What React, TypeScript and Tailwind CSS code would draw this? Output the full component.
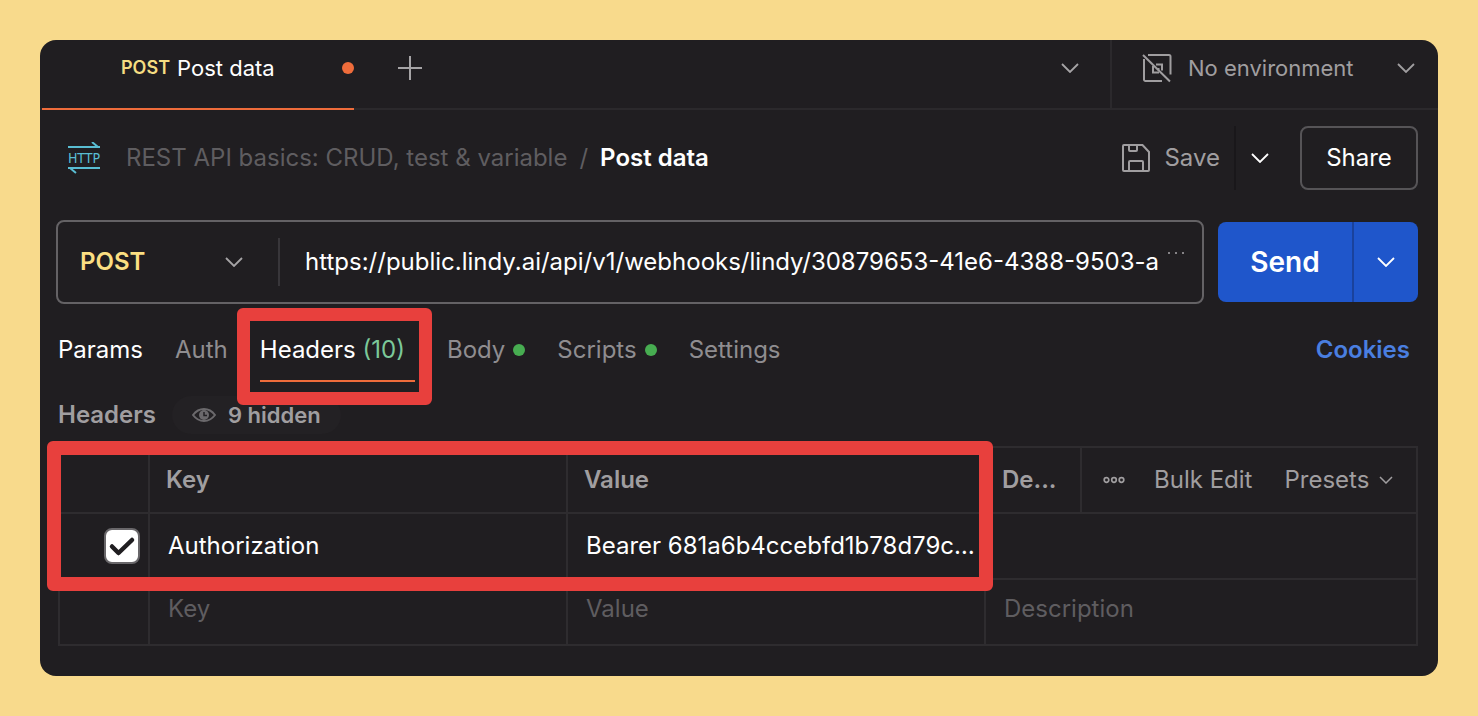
import React from 'react';

const Chevron: React.FC<{ className?: string }> = ({ className = '' }) => (
  <svg viewBox="0 0 18 10" className={`w-[18px] h-[10px] shrink-0 ${className}`} fill="none" stroke="currentColor" strokeWidth="1.8" aria-hidden="true">
    <path d="M1 1l8 8 8-8" />
  </svg>
);

const TabBar: React.FC = () => (
  <div className="flex h-[70px] pl-0.5 border-b-2 border-[#2b292c]">
    <button className="flex items-center w-[312px] h-[70px] pb-3 pl-[79px] border-b-2 border-[#ee6c3b]">
      <span className="text-lg font-semibold text-[#f5dd82]">POST</span>
      <span className="ml-[7px] text-[22px] text-white">Post data</span>
      <span className="ml-auto w-3 h-3 rounded-full bg-[#ee6c3b]"></span>
    </button>
    <button aria-label="New tab" className="h-14 px-11 text-[#a6a4a6]">
      <svg viewBox="0 0 24 24" className="w-6 h-6" fill="none" stroke="currentColor" strokeWidth="2">
        <path d="M12 0v24M0 12h24" />
      </svg>
    </button>
    <button aria-label="All tabs" className="ml-auto h-14 px-[31px] text-[#a6a4a6]">
      <Chevron />
    </button>
    <div className="w-[328px] border-l-2 border-[#2b292c]">
      <button className="flex items-center w-full h-14 pl-[30px] pr-[23px] text-[22px] text-[#a09ea0]">
        <svg viewBox="0 0 30 30" className="w-[30px] h-[30px] mr-4" fill="none" stroke="currentColor" strokeWidth="2" aria-hidden="true">
          <path d="M6 2h21a1.500 1.500 0 0 1 1.500 1.500V21.500M2 6v20.500a1.500 1.500 0 0 0 1.500 1.500H20" />
          <path d="M1 2l27 26.500" />
          <path d="M14 11.500h6v6M11 13v6.500h6M15.500 16h2" />
        </svg>
        No environment
        <Chevron className="ml-auto" />
      </button>
    </div>
  </div>
);

const TitleRow: React.FC = () => (
  <div className="flex items-center py-4 pl-[26px] pr-5 text-2xl">
    <svg viewBox="0 0 36 32" className="w-9 h-8" aria-hidden="true">
      <path d="M2 5h32M26 0l6 5M34 26H2M4 26l6 5" fill="none" stroke="#59bdd2" strokeWidth="2" />
      <text x="18" y="21" textAnchor="middle" fontSize="14" fill="#59bdd2" className="font-['DejaVu_Sans_Condensed',sans-serif]">HTTP</text>
    </svg>
    <a href="#collection" className="ml-6 text-[#5f5d60]">REST API basics: CRUD, test &amp; variable</a>
    <span className="mx-3 text-[#5f5d60]">/</span>
    <h1 className="font-semibold text-white">Post data</h1>
    <button className="flex items-center ml-auto text-[#a09ea0]">
      <svg viewBox="0 0 28 28" className="w-7 h-7 mr-3.5" fill="none" stroke="currentColor" strokeWidth="2" aria-hidden="true">
        <path d="M2 1h18.500L27 8v18a1 1 0 0 1-1 1H2a1 1 0 0 1-1-1V2a1 1 0 0 1 1-1z" />
        <path d="M7 1v5a1 1 0 0 0 1 1h6a1 1 0 0 0 1-1V1M7 27v-9a1 1 0 0 1 1-1h12a1 1 0 0 1 1 1v9" />
      </svg>
      Save
    </button>
    <button aria-label="Save options" className="h-16 ml-3.5 mr-[31px] pl-[15px] border-l-2 border-[#19171a] text-white">
      <Chevron />
    </button>
    <button className="w-[118px] h-16 rounded-lg border-2 border-[#565457] text-white">Share</button>
  </div>
);

const UrlRow: React.FC = () => (
  <div className="flex items-center gap-3.5 pt-3.5 pl-4 pr-5">
    <div className="flex flex-1 items-center h-[84px] rounded-lg border-2 border-[#646265] text-2xl">
      <div className="relative w-[222px] border-r-2 border-[#38363a]">
        <select aria-label="Method" className="appearance-none w-full h-12 pl-[22px] font-semibold text-[#fbdf82] bg-transparent">
          <option>POST</option>
        </select>
        <Chevron className="absolute right-[35px] top-[19px] text-[#a6a4a6] pointer-events-none" />
      </div>
      <input
        aria-label="Request URL"
        className="flex-1 min-w-0 ml-[25px] bg-transparent text-white"
        defaultValue="https://public.lindy.ai/api/v1/webhooks/lindy/30879653-41e6-4388-9503-a"
      />
      <svg viewBox="0 0 16 20" className="w-4 h-5 ml-[5px] mr-[18px] text-[#858386]" fill="currentColor" aria-hidden="true">
        <path d="M0 0h2v2H0zM7 0h2v2H7zM14 0h2v2h-2z" />
      </svg>
    </div>
    <div className="flex w-[200px] h-20 rounded-lg overflow-hidden bg-[#1f56cb] text-white">
      <button className="flex-1 text-[28px] font-semibold">Send</button>
      <button aria-label="Send options" className="flex items-center justify-center w-[66px] border-l-2 border-[#1a429c]">
        <Chevron />
      </button>
    </div>
  </div>
);

const RequestTabs: React.FC = () => (
  <nav className="flex items-start h-20 pt-7 pl-[18px] pr-7 text-2xl text-[#8f8d90]">
    <button className="h-9 text-white">Params</button>
    <button className="h-9 ml-8">Auth</button>
    <button className="relative ml-8 h-[50px] pb-3 pr-2.5 border-b-2 border-[#ee6c3b] text-white">
      Headers <span className="text-[#7cc99a]">(10)</span>
      <span className="absolute -left-[23px] -right-[17px] -top-6 h-[97px] rounded-md border-[13px] border-[#e8403d] pointer-events-none"></span>
    </button>
    <button className="flex items-center gap-2 h-9 ml-8">
      Body <span className="w-3 h-3 rounded-full bg-[#47ad51]"></span>
    </button>
    <button className="flex items-center gap-2 h-9 ml-8">
      Scripts <span className="w-3 h-3 rounded-full bg-[#47ad51]"></span>
    </button>
    <button className="h-9 ml-8">Settings</button>
    <a href="#cookies" className="ml-auto leading-9 font-semibold text-[#4a7fe0]">Cookies</a>
  </nav>
);

const HeadersTable: React.FC = () => (
  <div className="relative ml-[18px] mr-5 mt-3">
    <table className="w-full table-fixed border-separate border-spacing-0 border-l-2 border-t-2 border-[#2e2c2f] text-2xl text-left">
      <colgroup>
        <col className="w-[90px]" />
        <col />
        <col />
        <col className="w-24" />
        <col className="w-[336px]" />
      </colgroup>
      <thead className="text-[#a09ea0]">
        <tr className="h-[66px]">
          <th className="border-r-2 border-b-2 border-[#2e2c2f]"></th>
          <th className="pl-4 font-semibold border-r-2 border-b-2 border-[#2e2c2f]">Key</th>
          <th className="pl-4 font-semibold border-r-2 border-b-2 border-[#2e2c2f]">Value</th>
          <th className="pl-4 font-semibold border-r-2 border-b-2 border-[#2e2c2f]">De...</th>
          <th className="pl-[21px] font-normal border-r-2 border-b-2 border-[#2e2c2f]">
            <div className="flex items-center">
              <button aria-label="More columns">
                <svg viewBox="0 0 22 8" className="w-[22px] h-2" fill="none" stroke="currentColor" strokeWidth="1.700">
                  <circle cx="3.500" cy="4" r="2.300" />
                  <circle cx="11" cy="4" r="2.300" />
                  <circle cx="18.500" cy="4" r="2.300" />
                </svg>
              </button>
              <button className="ml-[29px]">Bulk Edit</button>
              <button className="flex items-center gap-2.5 ml-8">
                Presets
                <svg viewBox="0 0 14 8" className="w-3.5 h-2" fill="none" stroke="currentColor" strokeWidth="1.500" aria-hidden="true">
                  <path d="M1 1l6 6 6-6" />
                </svg>
              </button>
            </div>
          </th>
        </tr>
      </thead>
      <tbody>
        <tr className="h-[66px] text-white">
          <td className="pl-11 border-r-2 border-b-2 border-[#2e2c2f]">
            <label className="grid w-9 h-9">
              <input type="checkbox" defaultChecked aria-label="Enable Authorization" className="appearance-none col-start-1 row-start-1 w-9 h-9 rounded-lg border-2 border-[#69676a] bg-white" />
              <svg viewBox="0 0 36 36" className="col-start-1 row-start-1 w-9 h-9 pointer-events-none" fill="none" stroke="#201e21" strokeWidth="4.500" strokeLinecap="round" strokeLinejoin="round" aria-hidden="true">
                <path d="M8 18.500l6.500 6.500L28 12" />
              </svg>
            </label>
          </td>
          <td className="pl-[18px] border-r-2 border-b-2 border-[#2e2c2f]">
            <input aria-label="Header key" className="block w-full bg-transparent" defaultValue="Authorization" />
          </td>
          <td className="pl-[18px] border-r-2 border-b-2 border-[#2e2c2f]">
            <input aria-label="Header value" className="block w-full bg-transparent" defaultValue="Bearer 681a6b4ccebfd1b78d79c…" />
          </td>
          <td colSpan={2} className="border-r-2 border-b-2 border-[#2e2c2f]"></td>
        </tr>
        <tr className="h-[66px]">
          <td className="border-r-2 border-b-2 border-[#2e2c2f]"></td>
          <td className="pl-[18px] pb-1.5 border-r-2 border-b-2 border-[#2e2c2f]">
            <input aria-label="New key" placeholder="Key" className="block w-full bg-transparent placeholder:text-[#5f5d60]" />
          </td>
          <td className="pl-[18px] pb-1.5 border-r-2 border-b-2 border-[#2e2c2f]">
            <input aria-label="New value" placeholder="Value" className="block w-full bg-transparent placeholder:text-[#5f5d60]" />
          </td>
          <td colSpan={2} className="pl-[18px] pb-1.5 border-r-2 border-b-2 border-[#2e2c2f]">
            <input aria-label="New description" placeholder="Description" className="block w-full bg-transparent placeholder:text-[#5f5d60]" />
          </td>
        </tr>
      </tbody>
    </table>
    {/* Callout around the Authorization row, ends just past the value column */}
    <div className="absolute -left-[11px] right-[425px] -top-[5px] h-[150px] rounded-md border-[14px] border-[#e8403d] pointer-events-none"></div>
  </div>
);

const App: React.FC = () => {
  return (
    <main className="min-h-screen p-10 bg-[#f8da8c] font-['Inter',sans-serif]">
      <div className="pb-[30px] rounded-2xl overflow-hidden bg-[#201e21]">
        <TabBar />
        <TitleRow />
        <UrlRow />
        <RequestTabs />
        <div className="flex items-center h-[50px] pl-[18px] pt-3 text-[#a09ea0]">
          <h2 className="text-2xl font-semibold">Headers</h2>
          <button className="flex items-center gap-3 h-[38px] ml-4 px-5 rounded-full bg-[#232124] text-[22px] font-semibold">
            <svg viewBox="0 0 24 14" className="w-6 h-3.5" fill="none" stroke="#6b696c" strokeWidth="2" aria-hidden="true">
              <path d="M1 7c3-4 7-6 11-6s8 2 11 6c-3 4-7 6-11 6S4 11 1 7z" />
              <circle cx="12" cy="7" r="5" fill="#6b696c" stroke="none" />
              <path d="M12 4v3.500h3" stroke="#232124" strokeWidth="1.500" />
            </svg>
            9 hidden
          </button>
        </div>
        <HeadersTable />
      </div>
    </main>
  );
};

export default App;
